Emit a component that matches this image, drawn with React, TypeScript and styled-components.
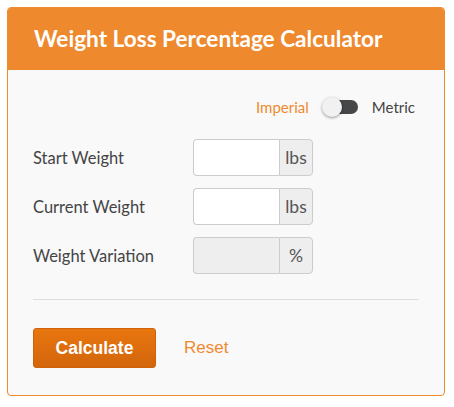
import React from "react";
import styled, { createGlobalStyle } from "styled-components";

const Global = createGlobalStyle`
  html, body { margin: 0; padding: 0; background: #ffffff; }
  body { font-family: Lato, "Open Sans", sans-serif; }
  * { box-sizing: border-box; }
`;

const Page = styled.div`
  padding: 7px;
`;

const Card = styled.div`
  width: 438px;
  height: 389px;
  border: 1px solid #ef8a2e;
  border-radius: 4px;
  background: #f9f9f9;
  overflow: hidden;
  display: flex;
  flex-direction: column;
`;

const Header = styled.div`
  height: 62px;
  background: #ee892d;
  display: flex;
  align-items: center;
  padding-left: 26px;
  flex-shrink: 0;
`;

const Title = styled.h1`
  margin: 0;
  font-family: Lato, sans-serif;
  font-weight: 700;
  font-size: 22.6px;
  color: #ffffff;
  letter-spacing: 0;
  position: relative;
  top: -1px;
`;

const Body = styled.div`
  padding: 0 25px;
  display: flex;
  flex-direction: column;
`;

const ToggleRow = styled.div`
  display: flex;
  justify-content: flex-end;
  align-items: center;
  height: 20px;
  margin-top: 27px;
  padding-right: 4px;
`;

const UnitLabel = styled.span<{ $active?: boolean }>`
  font-family: Lato, sans-serif;
  font-size: 15px;
  color: ${(p) => (p.$active ? "#ef8a2e" : "#444444")};
`;

const Switch = styled.div`
  position: relative;
  width: 36px;
  height: 20px;
  margin: 0 14px 0 13px;
`;

const Track = styled.div`
  position: absolute;
  left: 4px;
  right: 0;
  top: 3px;
  height: 14px;
  border-radius: 7px;
  background: #454749;
`;

const Knob = styled.div`
  position: absolute;
  left: 0;
  top: 0;
  width: 20px;
  height: 20px;
  border-radius: 50%;
  background: #f1f1f1;
  box-shadow: 0 1px 3px rgba(0, 0, 0, 0.4);
`;

const Form = styled.div`
  display: flex;
  flex-direction: column;
  gap: 12px;
  margin-top: 22px;
`;

const Row = styled.div`
  display: flex;
  align-items: center;
  height: 37px;
`;

const Label = styled.label`
  width: 160px;
  font-family: Lato, sans-serif;
  font-size: 16.5px;
  color: #444444;
`;

const InputGroup = styled.div`
  display: flex;
  height: 37px;
`;

const Field = styled.div<{ $disabled?: boolean }>`
  width: 86px;
  height: 100%;
  border: 1px solid #cccccc;
  border-right: none;
  border-radius: 4px 0 0 4px;
  background: ${(p) => (p.$disabled ? "#eeeeee" : "#ffffff")};
`;

const Addon = styled.div<{ $w: number }>`
  width: ${(p) => p.$w}px;
  height: 100%;
  border: 1px solid #cccccc;
  border-radius: 0 4px 4px 0;
  background: #eeeeee;
  display: flex;
  align-items: center;
  justify-content: center;
  font-family: Lato, sans-serif;
  font-size: 17.5px;
  color: #555555;
`;

const Divider = styled.hr`
  border: none;
  border-top: 1px solid #dddddd;
  margin: 25px 0 0 0;
`;

const Actions = styled.div`
  display: flex;
  align-items: center;
  margin-top: 28px;
  gap: 28px;
`;

const CalcButton = styled.button`
  width: 123px;
  height: 40px;
  border: 1px solid #d0620c;
  border-radius: 3px;
  background: linear-gradient(#e8760f, #d3660c);
  color: #ffffff;
  font-family: "Liberation Sans", Arial, sans-serif;
  font-weight: 700;
  font-size: 17.5px;
  padding: 0;
`;

const ResetLink = styled.span`
  font-family: "Liberation Sans", Arial, sans-serif;
  font-size: 17px;
  color: #ef8a2e;
`;

const rows = [
  { label: "Start Weight", unit: "lbs", w: 34, disabled: false },
  { label: "Current Weight", unit: "lbs", w: 34, disabled: false },
  { label: "Weight Variation", unit: "%", w: 34, disabled: true },
];

export default function App() {
  return (
    <Page>
      <Global />
      <Card>
        <Header>
          <Title>Weight Loss Percentage Calculator</Title>
        </Header>
        <Body>
          <ToggleRow>
            <UnitLabel $active>Imperial</UnitLabel>
            <Switch>
              <Track />
              <Knob />
            </Switch>
            <UnitLabel>Metric</UnitLabel>
          </ToggleRow>
          <Form>
            {rows.map((r) => (
              <Row key={r.label}>
                <Label>{r.label}</Label>
                <InputGroup>
                  <Field $disabled={r.disabled} />
                  <Addon $w={r.w}>{r.unit}</Addon>
                </InputGroup>
              </Row>
            ))}
          </Form>
          <Divider />
          <Actions>
            <CalcButton>Calculate</CalcButton>
            <ResetLink>Reset</ResetLink>
          </Actions>
        </Body>
      </Card>
    </Page>
  );
}
